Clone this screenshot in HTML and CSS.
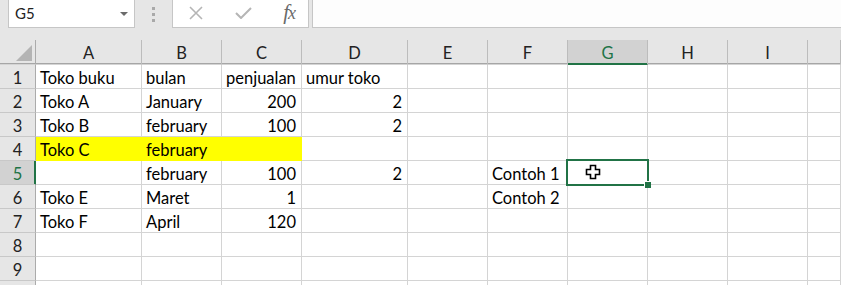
FILE: index.html
```html
<!DOCTYPE html>
<html lang="en">
<head>
    <meta charset="UTF-8">
    <meta name="viewport" content="width=device-width, initial-scale=1.0">
    <link rel="stylesheet" href="styles.css">
</head>
<body>
<div class="toolbar">
    <div class="name-box">
        <span>G5</span>
        <span class="caret"></span>
    </div>
    <div class="grip">
        <i></i><i></i><i></i>
    </div>
    <div class="fx-buttons">
        <svg class="btn-icon" width="16" height="14" viewBox="0 0 16 14">
            <path d="M2 1 L14 13 M14 1 L2 13" stroke="#b5b5b5" stroke-width="1.6" fill="none"/>
        </svg>
        <svg class="btn-icon" width="17" height="12" viewBox="0 0 17 12">
            <path d="M1 6 L6 11 L16 1" stroke="#b5b5b5" stroke-width="2" fill="none"/>
        </svg>
        <span class="fx"><i>f</i><i class="x">x</i></span>
    </div>
    <div class="formula-input"></div>
</div>

<div class="sheet">
    <!-- header row -->
    <div class="corner"><span class="tri"></span></div>
    <div class="col-head">A</div>
    <div class="col-head">B</div>
    <div class="col-head">C</div>
    <div class="col-head">D</div>
    <div class="col-head">E</div>
    <div class="col-head">F</div>
    <div class="col-head selected">G</div>
    <div class="col-head">H</div>
    <div class="col-head">I</div>
    <div class="col-head"></div>

    <div class="row-head">1</div>
    <div class="cell">Toko buku</div>
    <div class="cell">bulan</div>
    <div class="cell">penjualan</div>
    <div class="cell">umur toko</div>
    <div class="cell"></div><div class="cell"></div><div class="cell"></div><div class="cell"></div><div class="cell"></div><div class="cell"></div>

    <div class="row-head">2</div>
    <div class="cell">Toko A</div>
    <div class="cell">January</div>
    <div class="cell num">200</div>
    <div class="cell num">2</div>
    <div class="cell"></div><div class="cell"></div><div class="cell"></div><div class="cell"></div><div class="cell"></div><div class="cell"></div>

    <div class="row-head">3</div>
    <div class="cell">Toko B</div>
    <div class="cell">february</div>
    <div class="cell num">100</div>
    <div class="cell num">2</div>
    <div class="cell"></div><div class="cell"></div><div class="cell"></div><div class="cell"></div><div class="cell"></div><div class="cell"></div>

    <div class="row-head">4</div>
    <div class="cell fill">Toko C</div>
    <div class="cell fill">february</div>
    <div class="cell fill"></div>
    <div class="cell"></div>
    <div class="cell"></div><div class="cell"></div><div class="cell"></div><div class="cell"></div><div class="cell"></div><div class="cell"></div>

    <div class="row-head selected">5</div>
    <div class="cell"></div>
    <div class="cell">february</div>
    <div class="cell num">100</div>
    <div class="cell num">2</div>
    <div class="cell"></div>
    <div class="cell">Contoh 1</div>
    <div class="cell active">
        <svg class="pointer" width="17" height="16" viewBox="0 0 17 16">
            <path d="M5.5 1.5 H10.5 V5.5 H14.5 V10.5 H10.5 V14.5 H5.5 V10.5 H1.5 V5.5 H5.5 Z" fill="#fff" stroke="#000" stroke-width="1.6"/>
        </svg>
    </div>
    <div class="cell"></div><div class="cell"></div><div class="cell"></div>

    <div class="row-head">6</div>
    <div class="cell">Toko E</div>
    <div class="cell">Maret</div>
    <div class="cell num">1</div>
    <div class="cell"></div>
    <div class="cell"></div>
    <div class="cell">Contoh 2</div>
    <div class="cell"></div><div class="cell"></div><div class="cell"></div><div class="cell"></div>

    <div class="row-head">7</div>
    <div class="cell">Toko F</div>
    <div class="cell">April</div>
    <div class="cell num">120</div>
    <div class="cell"></div>
    <div class="cell"></div><div class="cell"></div><div class="cell"></div><div class="cell"></div><div class="cell"></div><div class="cell"></div>

    <div class="row-head">8</div>
    <div class="cell"></div><div class="cell"></div><div class="cell"></div><div class="cell"></div><div class="cell"></div>
    <div class="cell"></div><div class="cell"></div><div class="cell"></div><div class="cell"></div><div class="cell"></div>

    <div class="row-head">9</div>
    <div class="cell"></div><div class="cell"></div><div class="cell"></div><div class="cell"></div><div class="cell"></div>
    <div class="cell"></div><div class="cell"></div><div class="cell"></div><div class="cell"></div><div class="cell"></div>

    <div class="row-head"></div>
    <div class="cell"></div><div class="cell"></div><div class="cell"></div><div class="cell"></div><div class="cell"></div>
    <div class="cell"></div><div class="cell"></div><div class="cell"></div><div class="cell"></div><div class="cell"></div>
</div>
</body>
</html>
```

FILE: styles.css
```css
* {
    box-sizing: border-box;
}

body {
    margin: 0;
    padding: 0;
    background-color: #e6e6e6;
    font-family: Lato, "Noto Sans", sans-serif;
    color: #000;
    overflow: hidden;
}

/* formula bar */
.toolbar {
    display: flex;
    height: 28px;
    margin-bottom: 12px;
}

.name-box {
    width: 127px;
    margin-left: 8px;
    background-color: #fff;
    border: 1px solid #c6c6c6;
    border-top: none;
    display: flex;
    align-items: center;
    justify-content: space-between;
    padding: 0 6px 1px 6px;
    font-size: 15px;
    color: #222;
}

.caret {
    width: 0;
    height: 0;
    border-left: 4px solid transparent;
    border-right: 4px solid transparent;
    border-top: 4px solid #6b6b6b;
    margin-top: 1px;
}

.grip {
    width: 37px;
    display: flex;
    flex-direction: column;
    align-items: center;
    gap: 3px;
    padding-top: 7px;
}

.grip i {
    width: 3px;
    height: 3px;
    background-color: #a9a9a9;
}

.fx-buttons {
    width: 137px;
    background-color: #fff;
    border: 1px solid #c6c6c6;
    border-top: none;
    display: flex;
    align-items: center;
    padding: 0 13px 1px 15px;
    justify-content: space-between;
}

.fx {
    font-family: "Liberation Serif", serif;
    font-size: 21px;
    color: #6a6a6a;
    letter-spacing: -1px;
    margin-bottom: 2px;
}

.fx .x {
    font-size: 18px;
}

.formula-input {
    flex: 1;
    margin-left: 3px;
    background-color: #fdfdfd;
    border: 1px solid #c6c6c6;
    border-top: none;
    border-right: none;
}

/* grid */
.sheet {
    display: grid;
    grid-template-columns: 36px 106px 80px 80px 106px 80px 80px 80px 80px 80px 1fr;
    grid-auto-rows: 24px;
    grid-template-rows: 25px;
    background-color: #fff;
    font-size: 16.5px;
}

.corner {
    position: relative;
    background-color: #e6e6e6;
    border-right: 1px solid #ababab;
    border-bottom: 1px solid #d4d4d4;
    box-shadow: inset 0 -1px 0 #a6a6a6;
}

.tri {
    position: absolute;
    right: 3px;
    bottom: 3px;
    width: 0;
    height: 0;
    border-left: 16px solid transparent;
    border-bottom: 16px solid #b4b4b4;
}

.col-head {
    background-color: #e6e6e6;
    border-right: 1px solid #bcbcbc;
    border-bottom: 1px solid #d4d4d4;
    box-shadow: inset 0 -1px 0 #a6a6a6;
    display: flex;
    align-items: center;
    justify-content: center;
    padding-top: 1px;
    color: #222;
}

.col-head.selected {
    background-color: #d2d2d2;
    color: #217346;
    border-bottom-color: #217346;
    box-shadow: inset 0 -1px 0 #217346;
}

.row-head {
    background-color: #e6e6e6;
    border-right: 1px solid #ababab;
    border-bottom: 1px solid #c8c8c8;
    display: flex;
    align-items: flex-end;
    justify-content: center;
    line-height: 20px;
    color: #222;
}

.row-head.selected {
    background-color: #d2d2d2;
    color: #217346;
    border-right-color: #217346;
    box-shadow: inset -1px 0 0 #217346;
}

.cell {
    border-right: 1px solid #d4d4d4;
    border-bottom: 1px solid #d4d4d4;
    display: flex;
    align-items: flex-end;
    padding: 0 4px;
    line-height: 20px;
    white-space: nowrap;
}

.cell.num {
    justify-content: flex-end;
    padding-right: 5px;
}

.cell.fill {
    background-color: #ffff00;
    border-color: #ffff00;
}

.cell.active {
    position: relative;
}

.cell.active::before {
    content: "";
    position: absolute;
    left: -2px;
    top: -2px;
    right: -2px;
    bottom: -2px;
    border: 2px solid #217346;
}

.cell.active::after {
    content: "";
    position: absolute;
    right: -4px;
    bottom: -4px;
    width: 6px;
    height: 6px;
    background-color: #217346;
    border-left: 1px solid #fff;
    border-top: 1px solid #fff;
}

.pointer {
    position: absolute;
    left: 17px;
    top: 3px;
}
```
